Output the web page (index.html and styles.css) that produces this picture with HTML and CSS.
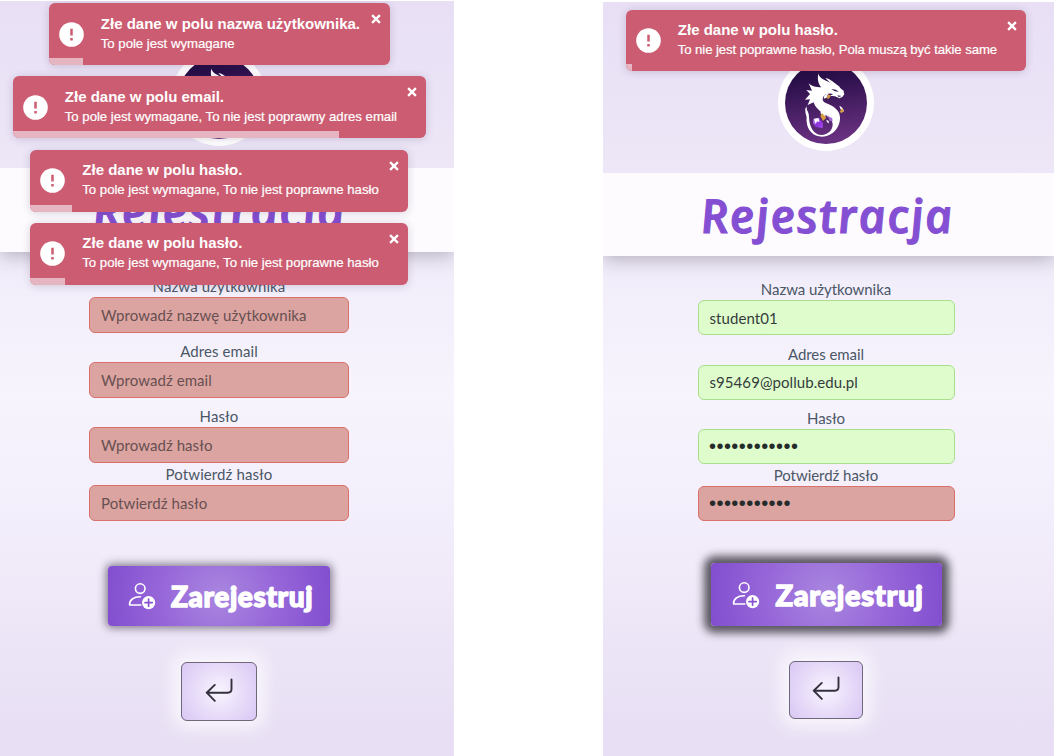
FILE: index.html
```html
<!DOCTYPE html>
<html lang="pl">
<head>
<meta charset="utf-8">
<title>Rejestracja</title>
<link rel="stylesheet" href="styles.css">
</head>
<body>
<svg class="sprite" aria-hidden="true">
  <defs>
    <linearGradient id="night" x1="0" y1="0" x2="0.15" y2="1"><stop offset="0.15" stop-color="#220b43"/><stop offset="1" stop-color="#683080"/></linearGradient>
    <linearGradient id="gem" x1="0" y1="0" x2="1" y2="1"><stop offset="0" stop-color="#d9a5ff"/><stop offset="0.5" stop-color="#8c31dc"/><stop offset="1" stop-color="#a44bed"/></linearGradient>
    <symbol id="dragon" viewBox="24 -15 288 288">
      <circle cx="168" cy="129" r="144" fill="#fff"/>
      <circle cx="168" cy="129" r="123" fill="url(#night)"/>
      <path fill="#fff" d="M144 37c2 14 12 20 24 25 10 4 17 7 23 12l-7-12c7 7 17 10 23 17 4 5 6 9 13 12l3 12-6 8-9 4-13-6-16-2 11-5c-12-4-25 0-30 8-5 9 0 16 9 20 20 8 40 19 41 42 1 32-24 58-54 58-26 0-44-20-46-44-1-17 2-30-6-43 9 6 13 16 13 28 1 30 14 54 38 54 19 0 33-14 33-32 0-27-48-33-57-66l-18 8 7-17-15 1 15-17-11-12 17 2-10-22c11 10 22 12 38 12-8-8-13-22-9-42z"/>
      <path fill="#fff" d="M166 55c12 0 19 8 30 17l-7 3c-9-7-14-12-23-20zM109 138c-4 12-4 20 0 29l5 5c-4-13-2-20-5-34zM208 137c6 2 12 8 14 17l-8 3c0-8-4-13-6-20z"/>
      <path fill="#351658" d="M184 87l14 2 8 7-13-3zM202 106l13 2-9 3z"/>
      <path fill="#fff" d="M163 106l12-6-5 13-9 3zM152 136c10 7 17 20 14 35l-14-10z"/>
      <path fill="#d89d42" d="M176 102l6 7-6 7-7-1zM156 159l13 14-10 10-8-15zM216 145l6 8-7 6-6-3z"/>
      <path fill="url(#gem)" d="M131 176l16-3 12 16-1 16-22-5-7-11z"/>
      <path fill="#fff" d="M132 177l13-3 4 12-8-2-4 8z"/>
      <path fill="#a56bd2" d="M174 166l12 5 2 13-10-2z"/>
      <path fill="#fff" d="M174 166l8 0 6 9-9-4zM169 179l6 3 3 8-7-3z"/>
    </symbol>
    <symbol id="alert" viewBox="0 0 26 26">
      <circle cx="13" cy="13" r="12.8" fill="#fff"/>
      <path d="M13 7v7M13 16.6v2.6" stroke="#cc5c71" stroke-width="2.6"/>
    </symbol>
    <symbol id="close" viewBox="0 0 10 10">
      <path d="M1.1 1.1 8.9 8.9M8.9 1.1 1.1 8.9" stroke="#fff" stroke-width="2.3"/>
    </symbol>
    <symbol id="user-plus" viewBox="0 0 28 28">
      <g fill="none" stroke="#fff" stroke-width="1.6" stroke-linecap="round" stroke-linejoin="round">
        <circle cx="12.2" cy="6.6" r="4.8"/>
        <path d="M12.8 23H1.6c-.5-5 4-8.3 10.8-8.2"/>
      </g>
      <circle cx="20.6" cy="20.6" r="6.6" fill="#fff"/>
      <path d="M20.6 17v7.2M17 20.6h7.2" stroke="#8752cf" stroke-width="1.7" stroke-linecap="round"/>
    </symbol>
    <symbol id="return" viewBox="0 0 28 24">
      <path d="M26.5 1.5V11q0 3.7-3.7 3.7H1.8M9.8 6.9 1.7 14.7 9.8 22.9" fill="none" stroke="#34313c" stroke-width="1.9" stroke-linecap="round" stroke-linejoin="round"/>
    </symbol>
  </defs>
</svg>
<main class="board">
  <section class="screen screen-empty">
    <header class="brand"><svg class="logo"><use href="#dragon"/></svg></header>
    <div class="title-band"><h1 class="title">Rejestracja</h1></div>
    <form class="form">
      <label class="field"><span class="caption">Nazwa użytkownika</span><input class="control invalid" type="text" placeholder="Wprowadź nazwę użytkownika"></label>
      <label class="field"><span class="caption">Adres email</span><input class="control invalid" type="text" placeholder="Wprowadź email"></label>
      <label class="field"><span class="caption">Hasło</span><input class="control invalid" type="password" placeholder="Wprowadź hasło"></label>
      <label class="field field-confirm"><span class="caption">Potwierdź hasło</span><input class="control invalid" type="password" placeholder="Potwierdź hasło"></label>
    </form>
    <button class="submit"><svg class="submit-icon"><use href="#user-plus"/></svg><span class="submit-text">Zarejestruj</span></button>
    <button class="back"><svg class="back-icon"><use href="#return"/></svg></button>
    <div class="toasts">
      <div class="toast toast-user"><svg class="toast-icon"><use href="#alert"/></svg><div class="toast-body"><strong class="toast-title">Złe dane w polu nazwa użytkownika.</strong><span class="toast-text">To pole jest wymagane</span></div><svg class="toast-close"><use href="#close"/></svg><i class="progress" style="width:34.5px"></i></div>
      <div class="toast toast-email"><svg class="toast-icon"><use href="#alert"/></svg><div class="toast-body"><strong class="toast-title">Złe dane w polu email.</strong><span class="toast-text">To pole jest wymagane, To nie jest poprawny adres email</span></div><svg class="toast-close"><use href="#close"/></svg><i class="progress" style="width:326.5px"></i></div>
      <div class="toast toast-pass"><svg class="toast-icon"><use href="#alert"/></svg><div class="toast-body"><strong class="toast-title">Złe dane w polu hasło.</strong><span class="toast-text">To pole jest wymagane, To nie jest poprawne hasło</span></div><svg class="toast-close"><use href="#close"/></svg><i class="progress" style="width:41.5px"></i></div>
      <div class="toast toast-pass"><svg class="toast-icon"><use href="#alert"/></svg><div class="toast-body"><strong class="toast-title">Złe dane w polu hasło.</strong><span class="toast-text">To pole jest wymagane, To nie jest poprawne hasło</span></div><svg class="toast-close"><use href="#close"/></svg><i class="progress" style="width:34.5px"></i></div>
    </div>
  </section>
  <section class="screen screen-filled">
    <header class="brand"><svg class="logo"><use href="#dragon"/></svg></header>
    <div class="title-band"><h1 class="title">Rejestracja</h1></div>
    <form class="form">
      <label class="field"><span class="caption">Nazwa użytkownika</span><input class="control valid" type="text" value="student01"></label>
      <label class="field"><span class="caption">Adres email</span><input class="control valid" type="text" value="s95469@pollub.edu.pl"></label>
      <label class="field"><span class="caption">Hasło</span><input class="control valid secret" type="text" value="••••••••••••"></label>
      <label class="field field-confirm"><span class="caption">Potwierdź hasło</span><input class="control invalid secret" type="text" value="•••••••••••"></label>
    </form>
    <button class="submit"><svg class="submit-icon"><use href="#user-plus"/></svg><span class="submit-text">Zarejestruj</span></button>
    <button class="back"><svg class="back-icon"><use href="#return"/></svg></button>
    <div class="toasts">
      <div class="toast toast-match"><svg class="toast-icon"><use href="#alert"/></svg><div class="toast-body"><strong class="toast-title">Złe dane w polu hasło.</strong><span class="toast-text">To nie jest poprawne hasło, Pola muszą być takie same</span></div><svg class="toast-close"><use href="#close"/></svg><i class="progress" style="width:6px"></i></div>
    </div>
  </section>
</main>
</body>
</html>
```
FILE: styles.css
```css
* { box-sizing: border-box; }
body { margin: 0; background: #fff; font-family: Lato, "Open Sans", sans-serif; }
.sprite { position: absolute; width: 0; height: 0; }
.board { display: flex; justify-content: space-between; width: 1054px; height: 756px; overflow: hidden; }

.screen { position: relative; display: flex; flex-direction: column; align-items: center; overflow: hidden; background: linear-gradient(#e8dff5 0, #ede7f7 23%, #f7f4fd 52%, #f3eefb 68%, #e8dff4 96%); }
.screen-empty { width: 454px; height: 755px; margin-top: 1px; padding-right: 16px; }
.screen-filled { width: 451px; height: 754px; margin-top: 2px; padding-right: 5px; }

.brand { display: flex; align-items: flex-end; flex: none; }
.screen-empty .brand { height: 167px; padding-bottom: 22px; }
.screen-filled .brand { height: 171px; padding-bottom: 22px; }
.logo { width: 96px; height: 96px; }

.title-band { align-self: stretch; flex: none; display: flex; justify-content: center; align-items: center; background: #fdfbfe; box-shadow: 0 3px 18px rgba(60, 50, 70, .34); clip-path: inset(0 0 -40px 0); }
.screen-empty .title-band { height: 84px; margin-right: -16px; padding-right: 17px; }
.screen-filled .title-band { height: 83px; margin-right: -5px; padding-right: 5px; }
.title { margin: 0; font: italic 600 47px/60px "Open Sans", sans-serif; letter-spacing: 1.4px; -webkit-text-stroke: 1.1px #844fd2; transform: skewX(7deg); color: #844fd2; white-space: nowrap; }

.form { display: flex; flex-direction: column; flex: none; }
.screen-empty .form { width: 260px; padding-top: 25.3px; gap: 9.6px; }
.screen-filled .form { width: 257px; padding-top: 24px; gap: 9.5px; }
.field { display: flex; flex-direction: column; }
.field-confirm { margin-top: -7.2px; }
.screen-filled .field-confirm { margin-top: -7.5px; }
.caption { height: 20px; line-height: 19px; font-size: 15px; text-align: center; color: #4b5766; }
.screen-empty .caption { letter-spacing: .1px; }
.screen-filled .caption { letter-spacing: -.05px; }
.control { height: 35.5px; width: 100%; padding: 0 11px; border: 1px solid; border-radius: 6px; outline: 0; font: 15px Lato, sans-serif; letter-spacing: .07px; color: #343c3b; }
.control::placeholder { color: #685051; opacity: 1; }
.invalid { background: #dba4a1; border-color: #d9716a; }
.valid { background: #dffccd; border-color: #a9de8e; }
.secret { padding-left: 10.5px; font-family: "Liberation Sans", sans-serif; font-size: 20px; letter-spacing: .45px; color: #252b2b; }
.screen-filled .control { height: 35px; }

.submit { display: flex; align-items: center; flex: none; padding: 0; border: 0; border-radius: 4px; color: #fff; background: radial-gradient(circle at 50% 50%, #a986df 0, #9767d9 50%, #824ecf 100%); }
.submit-text { font: 900 28px/40px Lato, sans-serif; letter-spacing: .6px; -webkit-text-stroke: 1.4px #fff; white-space: nowrap; }
.submit-icon { width: 28px; height: 28px; }
.screen-empty .submit { width: 222px; height: 60px; margin-top: 44.8px; padding-left: 20px; gap: 15px; box-shadow: 0 0 9px 2px rgba(70, 62, 80, .65); }
.screen-filled .submit { width: 231px; height: 63px; margin-top: 42px; padding-left: 21px; gap: 16px; box-shadow: 0 0 9px 7px rgba(82, 78, 89, .95); }
.screen-filled .submit-text { font-size: 29px; letter-spacing: .7px; }

.back { display: flex; justify-content: center; align-items: center; flex: none; padding: 0 0 4px; border: 1px solid #706779; border-radius: 6px; background: radial-gradient(circle, #f8f4fe 0, #e5d8f8 60%, #d9c7f5 100%); box-shadow: 0 0 17px 8px rgba(255, 255, 255, .72); }
.screen-empty .back { width: 76px; height: 59px; margin-top: 36.5px; }
.screen-filled .back { width: 74px; height: 58px; margin-top: 35px; }
.back-icon { width: 28px; height: 24px; }

/* notifications float over the page */
.toasts { position: absolute; left: 0; display: flex; flex-direction: column; align-items: center; gap: 11.3px; }
.screen-empty .toasts { top: 2px; width: 438px; }
.screen-filled .toasts { top: 8px; left: 23px; }
.toast { position: relative; display: flex; align-items: flex-start; height: 62px; padding: 18.5px 8px 0 10px; border-radius: 6px; overflow: hidden; background: #cc5c71; box-shadow: 0 1px 9px rgba(70, 40, 80, .2); color: #fff; font-family: "Liberation Sans", sans-serif; }
.toasts .toast { flex: none; }
.toast-user { width: 341px; }
.toast-email { width: 413px; }
.toast-pass { width: 378px; }
.toast-match { width: 400px; height: 61px; padding-top: 18px; }
.toast-icon { width: 25px; height: 25px; flex: none; }
.toast-body { display: flex; flex-direction: column; margin: -9px 0 0 17.3px; white-space: nowrap; }
.toast-title { font-size: 15px; line-height: 21px; }
.toast-text { font-size: 13.2px; line-height: 20.6px; letter-spacing: -.02px; -webkit-text-stroke: .2px #fff; }
.toast-match .toast-body { margin: -9.5px 0 0 16.8px; }
.toast-match .toast-text { line-height: 19px; letter-spacing: -.09px; }
.toast-close { position: absolute; top: 11px; right: 9px; width: 10px; height: 10px; }
.progress { position: absolute; left: 0; bottom: 0; height: 7px; background: #e5b5c2; }
```
